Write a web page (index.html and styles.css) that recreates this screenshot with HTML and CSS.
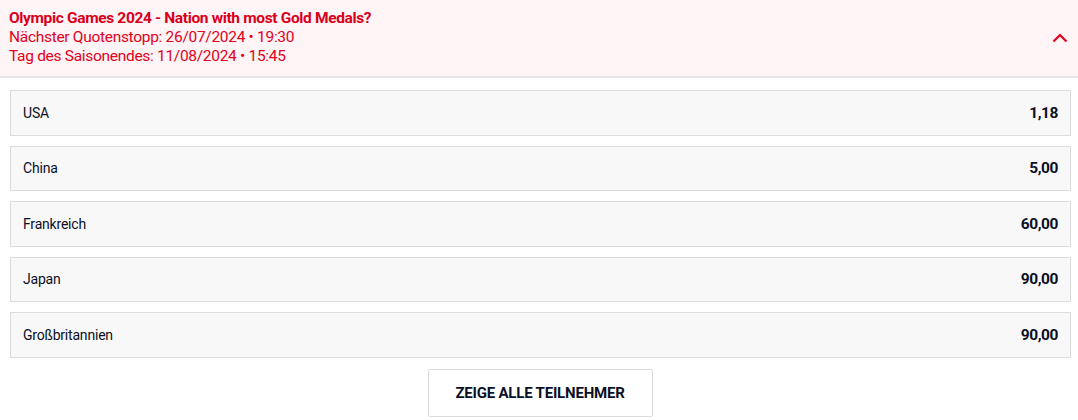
FILE: index.html
```html
<!DOCTYPE html>
<html lang="de">
<head>
<meta charset="utf-8">
<link rel="stylesheet" href="styles.css">
</head>
<body>
<div class="market">
  <div class="header">
    <div class="info">
      <div class="title">Olympic Games 2024 - Nation with most Gold Medals?</div>
      <div class="sub">Nächster Quotenstopp: 26/07/2024 • 19:30</div>
      <div class="sub">Tag des Saisonendes: 11/08/2024 • 15:45</div>
    </div>
    <svg class="chev" width="16" height="10" viewBox="0 0 16 10"><path d="M1.5 8.5 L8 2 L14.5 8.5" fill="none" stroke="#e3001b" stroke-width="2.2"/></svg>
  </div>
  <div class="rows">
    <div class="row"><span class="name">USA</span><span class="odd">1,18</span></div>
    <div class="row"><span class="name">China</span><span class="odd">5,00</span></div>
    <div class="row"><span class="name">Frankreich</span><span class="odd">60,00</span></div>
    <div class="row"><span class="name">Japan</span><span class="odd">90,00</span></div>
    <div class="row"><span class="name">Großbritannien</span><span class="odd">90,00</span></div>
  </div>
  <div class="more"><button class="btn">ZEIGE ALLE TEILNEHMER</button></div>
</div>
</body>
</html>
```
FILE: styles.css
```css
* { box-sizing: border-box; }
body { margin: 0; background: #fff; font-family: Roboto, "Liberation Sans", sans-serif; }
.header {
  background: #fff4f6;
  border-bottom: 2px solid #e6e6ea;
  display: flex;
  justify-content: space-between;
  align-items: center;
  padding: 9px 9px 10px 9px;
  height: 78px;
}
.title { color: #d9001b; font-weight: 700; font-size: 15.5px; line-height: 19px; letter-spacing: -0.35px; }
.sub { color: #e3001b; font-size: 15.5px; line-height: 19px; letter-spacing: -0.3px; }
.chev { margin-right: 1px; margin-top: 0; }
.rows { padding: 12px 7px 0 10px; display: flex; flex-direction: column; gap: 10px; }
.row {
  height: 45.5px;
  background: #f8f8f8;
  border: 1px solid #dcdcdf;
  display: flex;
  justify-content: space-between;
  align-items: center;
  padding: 0 12px 0 12px;
}
.name { font-size: 14px; color: #0b1026; letter-spacing: -0.2px; }
.odd { font-size: 15.5px; font-weight: 700; color: #0b1026; letter-spacing: -0.45px; }
.more { display: flex; justify-content: center; padding-top: 11px; padding-left: 2px; }
.btn {
  width: 225px; height: 48px;
  background: #fff;
  border: 1px solid #dcdcdf;
  border-radius: 2px;
  font-family: Roboto, "Liberation Sans", sans-serif;
  font-weight: 700; font-size: 15px; color: #0b1026;
  letter-spacing: -0.2px;
}
```
